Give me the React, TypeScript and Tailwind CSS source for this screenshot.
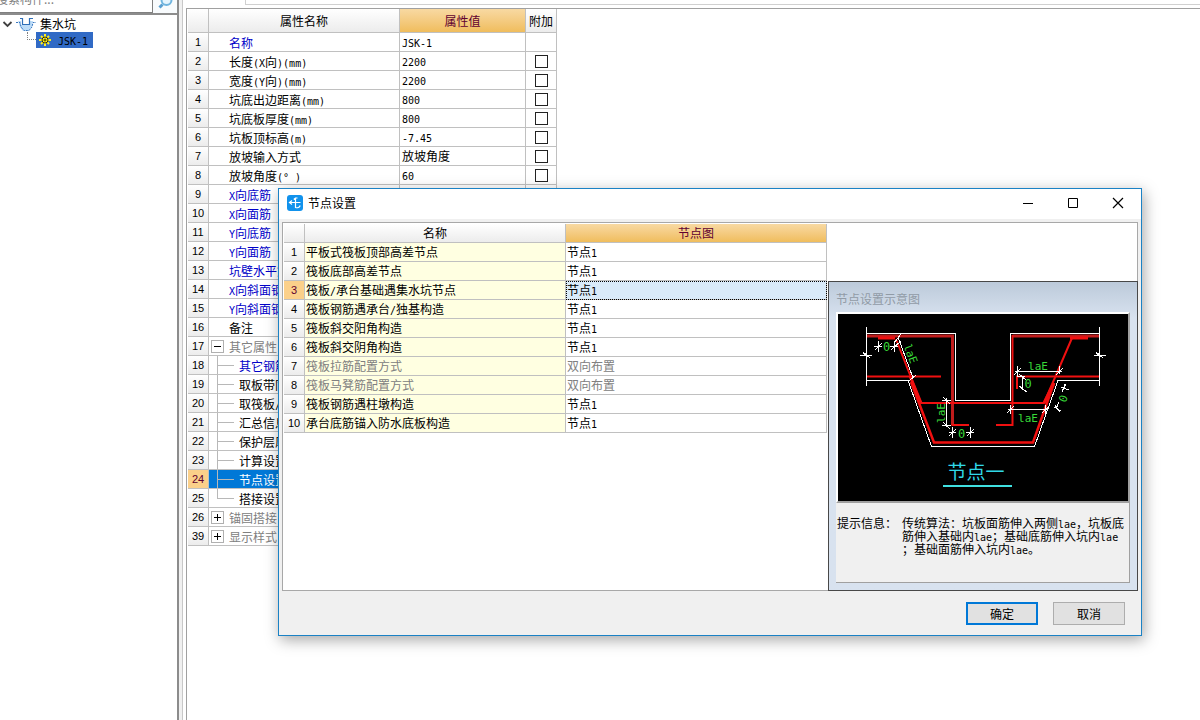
import React from "react";

type Tone = "black" | "blue" | "gray" | "white";
type Node = "leaf" | "open" | "closed" | "child" | "last";

interface Property {
  no: number;
  name: string;
  value?: string;
  check?: boolean;
  tone?: Tone;
  node?: Node;
  selected?: boolean;
}

const properties: Property[] = [
  { no: 1, name: "名称", value: "JSK-1", tone: "blue" },
  { no: 2, name: "长度(X向)(mm)", value: "2200", check: true },
  { no: 3, name: "宽度(Y向)(mm)", value: "2200", check: true },
  { no: 4, name: "坑底出边距离(mm)", value: "800", check: true },
  { no: 5, name: "坑底板厚度(mm)", value: "800", check: true },
  { no: 6, name: "坑板顶标高(m)", value: "-7.45", check: true },
  { no: 7, name: "放坡输入方式", value: "放坡角度", check: true },
  { no: 8, name: "放坡角度(° )", value: "60", check: true },
  { no: 9, name: "X向底筋", tone: "blue" },
  { no: 10, name: "X向面筋", tone: "blue" },
  { no: 11, name: "Y向底筋", tone: "blue" },
  { no: 12, name: "Y向面筋", tone: "blue" },
  { no: 13, name: "坑壁水平筋", tone: "blue" },
  { no: 14, name: "X向斜面钢筋", tone: "blue" },
  { no: 15, name: "Y向斜面钢筋", tone: "blue" },
  { no: 16, name: "备注" },
  { no: 17, name: "其它属性", tone: "gray", node: "open" },
  { no: 18, name: "其它钢筋", tone: "blue", node: "child" },
  { no: 19, name: "取板带同", node: "child" },
  { no: 20, name: "取筏板/", node: "child" },
  { no: 21, name: "汇总信息", node: "child" },
  { no: 22, name: "保护层厚", node: "child" },
  { no: 23, name: "计算设置", node: "child" },
  { no: 24, name: "节点设置", tone: "white", node: "child", selected: true },
  { no: 25, name: "搭接设置", node: "last" },
  { no: 26, name: "锚固搭接", tone: "gray", node: "closed" },
  { no: 39, name: "显示样式", tone: "gray", node: "closed" },
];

const joints = [
  { name: "平板式筏板顶部高差节点", value: "节点1" },
  { name: "筏板底部高差节点", value: "节点1" },
  { name: "筏板/承台基础遇集水坑节点", value: "节点1", active: true },
  { name: "筏板钢筋遇承台/独基构造", value: "节点1" },
  { name: "筏板斜交阳角构造", value: "节点1" },
  { name: "筏板斜交阴角构造", value: "节点1" },
  { name: "筏板拉筋配置方式", value: "双向布置", muted: true },
  { name: "筏板马凳筋配置方式", value: "双向布置", muted: true },
  { name: "筏板钢筋遇柱墩构造", value: "节点1" },
  { name: "承台底筋锚入防水底板构造", value: "节点1" },
];

const toneClass: Record<Tone, string> = {
  black: "text-black",
  blue: "text-[#0000c8]",
  gray: "text-[#808080]",
  white: "text-white",
};

const lineColor = "border-[#c0c0c0]";
const headPlain = "bg-linear-to-b from-white to-[#ececec]";
const headActive = "bg-linear-to-b from-[#f8d9a2] to-[#f0bd5c] text-[#600030]";

/* Half-width characters take a monospaced face, half as wide as the ideographs. */
function Mixed({ text }: { text: string }) {
  const parts = text.split(/([\x20-\x7e°]+)/).filter(Boolean);
  return (
    <>
      {parts.map((part, i) =>
        /^[\x20-\x7e°]/.test(part) ? (
          <span key={i} className="font-['DejaVu_Sans_Mono',monospace] text-[10px] leading-none whitespace-pre">
            {part}
          </span>
        ) : (
          <span key={i}>{part}</span>
        ),
      )}
    </>
  );
}

function TreeMark({ node }: { node: Node }) {
  if (node === "open" || node === "closed") {
    return (
      <span className="flex w-5 shrink-0 items-center pl-0.5">
        <button
          aria-label={node === "open" ? "折叠" : "展开"}
          className="flex size-[13px] items-center justify-center border border-[#b0b0b0] bg-white"
        >
          <svg viewBox="0 0 11 11" className="size-[11px]" stroke="#000" fill="none">
            <path d={node === "open" ? "M2 5.5H9" : "M2 5.5H9M5.5 2V9"} />
          </svg>
        </button>
      </span>
    );
  }
  if (node === "child" || node === "last") {
    return (
      <span className="flex h-full w-[30px] shrink-0 pl-2">
        <span className={`w-px bg-[#b8b8b8] ${node === "last" ? "h-2.5" : "h-full"}`} />
        <span className="mt-[9px] h-px w-4 bg-[#b8b8b8]" />
      </span>
    );
  }
  return <span className="w-5 shrink-0" />;
}

function PropertyTable() {
  return (
    <table className="table-fixed border-separate border-spacing-0">
      <colgroup>
        <col className="w-[21px]" />
        <col className="w-[191px]" />
        <col className="w-[126px]" />
        <col className="w-[31px]" />
      </colgroup>
      <thead>
        <tr className="h-6 leading-[23px]">
          <th className={`border-r border-b p-0 ${lineColor} ${headPlain}`} />
          <th className={`border-r border-b p-0 font-normal ${lineColor} ${headPlain}`}>属性名称</th>
          <th className={`border-r border-b p-0 font-normal ${lineColor} ${headActive}`}>属性值</th>
          <th className={`border-r border-b p-0 font-normal whitespace-nowrap ${lineColor} ${headPlain}`}>附加</th>
        </tr>
      </thead>
      <tbody>
        {properties.map((p) => (
          <tr key={p.no} className="leading-[18px]">
            <th
              className={`border-r border-b p-0 font-['Liberation_Sans',sans-serif] text-[11px] font-normal ${lineColor} ${
                p.selected ? "bg-[#fbd08a] text-[#600030]" : headPlain
              }`}
            >
              {p.no}
            </th>
            <td className={`border-r border-b p-0 ${lineColor} ${p.selected ? "bg-[#0078d7]" : ""}`}>
              <div className={`flex h-[18px] overflow-hidden whitespace-nowrap ${toneClass[p.tone ?? "black"]}`}>
                <TreeMark node={p.node ?? "leaf"} />
                <span className="pt-px">
                  <Mixed text={p.name} />
                </span>
              </div>
            </td>
            <td className={`border-r border-b p-0 pl-0.5 ${lineColor}`}>
              <div className="h-[18px] whitespace-nowrap">
                <Mixed text={p.value ?? ""} />
              </div>
            </td>
            <td className={`border-r border-b p-0 ${lineColor}`}>
              {p.check && (
                <div className="flex justify-center pt-px">
                  <input
                    type="checkbox"
                    aria-label={p.name}
                    className="size-[13px] appearance-none border border-[#222] bg-white"
                  />
                </div>
              )}
            </td>
          </tr>
        ))}
      </tbody>
    </table>
  );
}

function Sidebar() {
  return (
    <aside className="flex w-[179px] shrink-0 flex-col border-r-2 border-[#8c8c8c] bg-white">
      <div className="flex h-[15px] shrink-0 overflow-hidden border-b-2 border-[#8c8c8c] bg-[#f8fbfd]">
        <div className="flex flex-1 items-end overflow-hidden border-r border-b border-[#808080] bg-white pb-1">
          <input
            aria-label="搜索构件"
            placeholder="搜索构件..."
            className="-ml-1 h-[18px] w-full leading-[18px] outline-none placeholder:text-[#808080]"
          />
        </div>
        <button aria-label="搜索" className="flex w-6 items-end justify-center pb-1">
          <svg viewBox="0 0 16 16" className="size-4 shrink-0" fill="none">
            <circle cx="9.5" cy="7" r="5" fill="#e4f4fd" stroke="#6fb4de" strokeWidth="2" />
            <path d="M5.5 11.5L2.5 14.5" stroke="#5a9fd0" strokeWidth="3" />
          </svg>
        </button>
      </div>
      <ul className="pt-px leading-4">
        <li>
          <div className="flex items-center pl-0.5">
            <svg viewBox="0 0 12 12" className="size-3" fill="none" stroke="#404040" strokeWidth="1.8">
              <path d="M1.5 4L5.5 8L9.5 4" />
            </svg>
            <svg viewBox="0 0 20 16" className="mx-0.5 h-4 w-5" fill="none">
              <path d="M2 5H5V9H14V5H17L16 11L13 15H7L4 11Z" fill="#bcdcf8" />
              <path d="M0 6.500H4L5 11L8 14.500H13L16 11L17 6.500H20" stroke="#3a78c0" strokeDasharray="2 1" />
              <path d="M4 2.500H6.500V8.500H13.500V2.500H17" stroke="#2f6fb8" strokeWidth="1.200" />
            </svg>
            <span className="ml-0.5">集水坑</span>
          </div>
          <ul>
            <li className="flex pl-[27px]">
              <span className="h-2 w-[9px] border-b border-l border-dotted border-[#808080]" />
              <span className="flex h-4 items-center bg-[#316ac5] pr-[5px] pl-0.5 text-black">
                <svg viewBox="0 0 14 14" className="size-3.5" fill="none">
                  <path
                    d="M7 1V13M1 7H13M3 3L11 11M11 3L3 11"
                    stroke="#ffee20"
                    strokeWidth="2"
                  />
                  <circle cx="7" cy="7" r="3" fill="#ffee20" stroke="#303000" />
                  <path d="M7 5.5V8.5M5.5 7H8.5" stroke="#303000" />
                </svg>
                <span className="ml-1.5">
                  <Mixed text="JSK-1" />
                </span>
              </span>
            </li>
          </ul>
        </li>
      </ul>
    </aside>
  );
}

function Diagram() {
  return (
    <svg
      viewBox="0 0 290 187"
      className="block h-[187px] w-full bg-black font-['DejaVu_Sans_Mono',monospace]"
      role="img"
      aria-label="节点一"
      fill="none"
    >
      <g stroke="#c01c1c" strokeWidth="3">
        <path d="M28 22H114.500V111" />
        <path d="M262 22H174.500" />
      </g>
      <g stroke="#f01010" strokeWidth="2">
        <path d="M114.500 110V111H131" />
        <path d="M174.500 21V111H158" />
        <path d="M28 62.500H103M179 75V62.500H262" />
        <path d="M58 25L83 89H206L234 24" />
      </g>
      <g stroke="#f01010" strokeWidth="3">
        <path d="M40 24H57M232 24H250" />
        <path d="M73 68L96 128.500H195L216 69" strokeWidth="2.500" />
        <path d="M72 62L83 89M216 69L206 89" />
      </g>
      <g stroke="#fff" shapeRendering="crispEdges">
        <path d="M28.500 13V72M28.500 19.500H117.500V86.500H172.500V19.500H261.500M261.500 13V72" />
        <path d="M28.500 66.500H70L93.500 132.500H196.500L220 66.500H261.500" />
        <path d="M22 41.500H27L25 38L32 44L30 41.500H34" />
        <path d="M256 41.500H260L258 38L265 44L263 41.500H268" />
        <path d="M60 23L75 64" />
        <path d="M57 28L63 20M57 33L63 27M71 67L78 61" />
        <path d="M36 32.500H44M52 32.500H60M40.500 27V38M56.500 27V38M37 36L44 29M53 36L60 29" />
        <path d="M108.500 84V113M104 86.500H113M104 111.500H113M105 83L112 90M105 108L112 115" />
        <path d="M114.500 113V124M132.500 113V124M111 118.500H118M128 118.500H136M111 122L118 115M129 122L136 115" />
        <path d="M179.500 52V62M221.500 52V60M177 57.500H224M176 61L183 54M218 61L225 54" />
        <path d="M184.500 62V76M179 62.500H187M181 60L188 66M181 72L189 78" />
        <path d="M172.500 91V100M207.500 91V100M170 95.500H210M169 99L176 92M204 99L211 92" />
        <path d="M227 70L224 78M221 88L218 95M223 73L231 76M216 93L223 97M224 78L228 70M217 91L222 98" />
      </g>
      <g fill="#38d838" fontSize="12" textAnchor="middle">
        <text x="48.500" y="37">0</text>
        <text x="123.500" y="124">0</text>
        <text x="190" y="74">0</text>
        <text x="200" y="56" fontSize="11">laE</text>
        <text x="190" y="108" fontSize="11">laE</text>
        <text transform="translate(69 41) rotate(70)" fontSize="11">laE</text>
        <text transform="translate(107 99) rotate(-90)" fontSize="11">laE</text>
        <text transform="translate(229 86) rotate(-70)" fontSize="11">0</text>
      </g>
      <text
        x="138"
        y="165"
        textAnchor="middle"
        fontSize="19"
        fill="#30d8e8"
        className="font-['Noto_Sans_CJK_SC',sans-serif]"
      >
        节点一
      </text>
      <path d="M105 172H174" stroke="#40e0e0" strokeWidth="2" />
    </svg>
  );
}

function JointTable() {
  return (
    <table className="table-fixed self-start border-separate border-spacing-0">
      <colgroup>
        <col className="w-[21px]" />
        <col className="w-[261px]" />
        <col className="w-[261px]" />
      </colgroup>
      <thead>
        <tr className="leading-[18px]">
          <th className={`border-r border-b p-0 ${lineColor} ${headPlain}`} />
          <th className={`border-r border-b p-0 font-normal ${lineColor} ${headPlain}`}>名称</th>
          <th className={`border-r border-b p-0 font-normal ${lineColor} ${headActive}`}>节点图</th>
        </tr>
      </thead>
      <tbody>
        {joints.map((j, i) => (
          <tr key={j.name} className={`leading-[18px] ${j.muted ? "text-[#808080]" : "text-black"}`}>
            <th
              className={`border-r border-b p-0 font-['Liberation_Sans',sans-serif] text-[11px] font-normal ${lineColor} ${
                j.active ? "bg-[#fbd08a] text-[#600030]" : `text-black ${headPlain}`
              }`}
            >
              {i + 1}
            </th>
            <td className={`border-r border-b bg-[#ffffe1] p-0 pl-px ${lineColor}`}>
              <div className="h-[18px]">
                <Mixed text={j.name} />
              </div>
            </td>
            <td
              className={`border-r border-b p-0 pl-px ${lineColor} ${
                j.active ? "bg-[#d9eaf9] outline outline-offset-[-1px] outline-dotted outline-black" : ""
              }`}
            >
              <div className="h-[18px]">
                <Mixed text={j.value} />
              </div>
            </td>
          </tr>
        ))}
      </tbody>
    </table>
  );
}

function Preview() {
  return (
    <section className="flex w-[310px] flex-col self-end border border-[#484848] bg-linear-to-b from-[#bccada] to-[#d8e2ef] to-[36px] px-[7px] pb-[7px]">
      <h3 className="pt-2 pb-1 leading-[18px] text-[#919ba6]">节点设置示意图</h3>
      <div className="border-t-2 border-r-2 border-b-2 border-l-2 border-t-white border-r-[#a0a0a0] border-b-[#a0a0a0] border-l-white">
        <Diagram />
      </div>
      <div className="flex h-[80px] border-r border-b border-[#a0a0a0] bg-[#f0f0f0] pt-[14px] pl-px leading-3">
        <span className="w-[65px] shrink-0">提示信息：</span>
        <p className="whitespace-nowrap">
          <Mixed text="传统算法：坑板面筋伸入两侧lae，坑板底" />
          <br />
          <Mixed text="筋伸入基础内lae；基础底筋伸入坑内lae" />
          <br />
          <Mixed text="；基础面筋伸入坑内lae。" />
        </p>
      </div>
    </section>
  );
}

function JointDialog() {
  return (
    <div
      role="dialog"
      aria-label="节点设置"
      className="absolute top-[188px] left-[278px] flex w-[864px] flex-col border border-[#1b82c5] bg-[#f0f0f0] shadow-[2px_4px_14px_rgba(0,0,0,0.35)]"
    >
      <header className="flex h-[30px] items-center justify-between bg-white pb-0.5 pl-2">
        <div className="flex items-center gap-[5px]">
          <svg viewBox="0 0 16 16" className="size-4" fill="none">
            <rect width="16" height="16" rx="3" fill="#1192ec" />
            <path
              d="M10.500 3H8.500V12.500C10.500 13.200 12.500 12.500 13.200 10.500M2.500 7.500H13.500M5 5.500L2.500 7.500L5 9.500M6.800 4.500L8.500 3"
              stroke="#fff"
              strokeWidth="1.200"
            />
          </svg>
          <h2>节点设置</h2>
        </div>
        <div className="flex">
          <button aria-label="最小化" className="flex h-7 w-[45px] items-center justify-center">
            <svg viewBox="0 0 12 12" className="size-3" stroke="#000"><path d="M1 6.500H11" /></svg>
          </button>
          <button aria-label="最大化" className="flex h-7 w-[45px] items-center justify-center">
            <svg viewBox="0 0 12 12" className="size-3" stroke="#000" fill="none"><path d="M1.500 1.500H10.500V10.500H1.500Z" /></svg>
          </button>
          <button aria-label="关闭" className="flex h-7 w-[46px] items-center justify-center">
            <svg viewBox="0 0 12 12" className="size-3" stroke="#000"><path d="M1 1L11 11M11 1L1 11" strokeWidth="1.200" /></svg>
          </button>
        </div>
      </header>
      <div className="mx-[3px] mt-[3px] flex h-[369px] justify-between border border-[#a8a8a8] bg-white">
        <div className="pt-px pl-px">
          <JointTable />
        </div>
        <div className="-mr-px -mb-px flex">
          <Preview />
        </div>
      </div>
      <footer className="flex items-center justify-end gap-[15px] px-4 pt-[11px] pb-[10px]">
        <button className="h-[23px] w-[72px] border-2 border-[#0078d7] bg-[#e1e1e1]">
          <span className="block leading-[19px]">确定</span>
        </button>
        <button className="h-[23px] w-[72px] border border-[#adadad] bg-[#e1e1e1]">
          <span className="block leading-[21px]">取消</span>
        </button>
      </footer>
    </div>
  );
}

export default function App() {
  return (
    <div className="relative flex h-screen overflow-hidden bg-[#f0f0f0] font-['Noto_Sans_CJK_SC',sans-serif] text-[12px] text-black">
      <Sidebar />
      <main className="ml-[3px] flex min-w-0 flex-1 flex-col border-l border-[#c8c8c8] bg-white pl-[3px]">
        <div className="flex h-2 shrink-0">
          <div className="ml-[59px] h-[5px] flex-1 border-b border-l border-[#d0d0d0] bg-white" />
        </div>
        <div className="min-h-0 flex-1 overflow-hidden border-t border-l border-[#a0a0a0] bg-white pl-px">
          <PropertyTable />
        </div>
      </main>
      <JointDialog />
    </div>
  );
}
